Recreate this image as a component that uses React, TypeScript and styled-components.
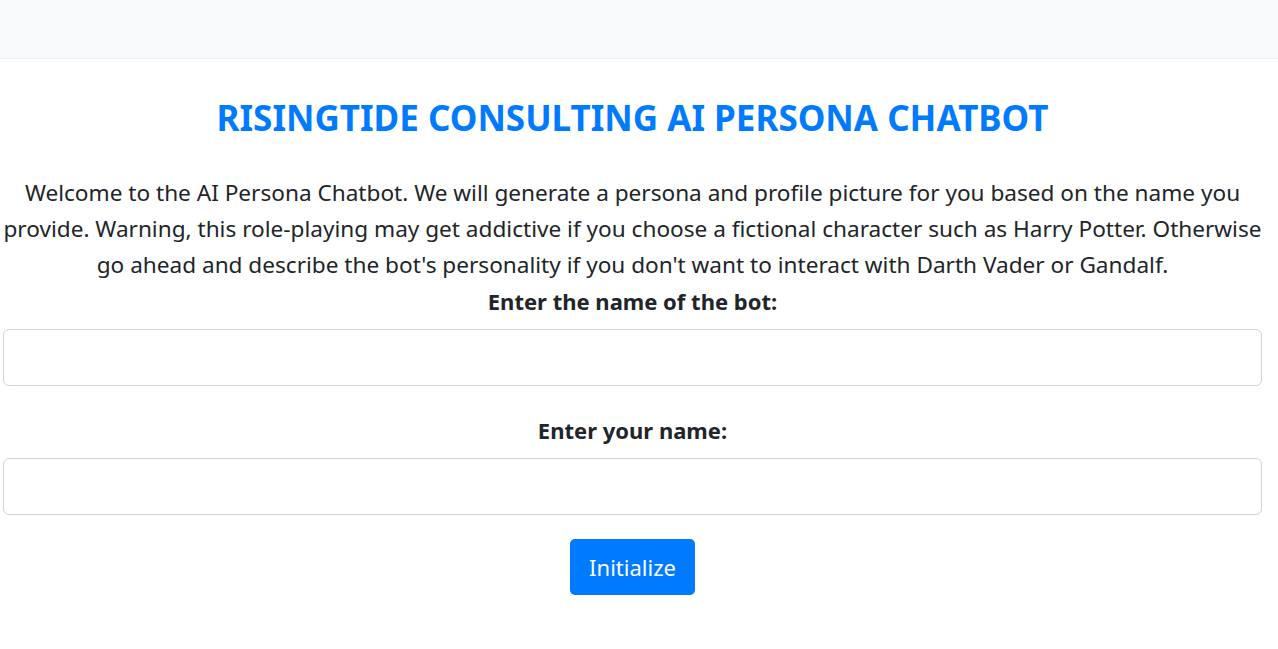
import React from "react";
import styled, { createGlobalStyle } from "styled-components";

const Global = createGlobalStyle`
  html, body { margin: 0; padding: 0; background: #fff; }
  body { font-family: "Noto Sans", "Open Sans", sans-serif; color: #212529; }
`;

const NavBar = styled.nav`
  height: 58px;
  background: #f8f9fa;
  border-bottom: 1px solid #eceef0;
`;

const Main = styled.main`
  padding: 0 16px 0 3px;
  display: flex;
  flex-direction: column;
  align-items: stretch;
  text-align: center;
`;

const Title = styled.h1`
  margin: 37px 0 0;
  font-size: 35px;
  line-height: 44px;
  font-weight: 700;
  color: #007bff;
`;

const Intro = styled.p`
  margin: 35px 0 0;
  font-size: 22.6px;
  line-height: 36px;
`;

const Field = styled.div`
  display: flex;
  flex-direction: column;
  align-items: stretch;
  margin-bottom: ${(p: { $gap: number }) => p.$gap}px;
`;

const Label = styled.label`
  font-size: 22px;
  line-height: 36px;
  font-weight: 700;
  margin-bottom: 10px;
`;

const Input = styled.input`
  height: 57px;
  box-sizing: border-box;
  border: 1px solid #ced4da;
  border-radius: 6px;
  background: #fff;
  font-size: 22px;
  padding: 0 16px;
  outline: none;
`;

const Button = styled.button`
  align-self: center;
  width: 125px;
  height: 56px;
  border: none;
  border-radius: 5px;
  background: #007bff;
  color: #fff;
  font-family: inherit;
  font-size: 22px;
  cursor: pointer;
`;

export default function App() {
  return (
    <>
      <Global />
      <NavBar />
      <Main>
        <Title>RISINGTIDE CONSULTING AI PERSONA CHATBOT</Title>
        <Intro>
          Welcome to the AI Persona Chatbot. We will generate a persona and profile picture for you based on the name you provide. Warning, this role-playing may get addictive if you choose a fictional character such as Harry Potter. Otherwise go ahead and describe the bot's personality if you don't want to interact with Darth Vader or Gandalf.
        </Intro>
        <Field $gap={26}>
          <Label htmlFor="bot">Enter the name of the bot:</Label>
          <Input id="bot" type="text" />
        </Field>
        <Field $gap={24}>
          <Label htmlFor="user">Enter your name:</Label>
          <Input id="user" type="text" />
        </Field>
        <Button>Initialize</Button>
      </Main>
    </>
  );
}
